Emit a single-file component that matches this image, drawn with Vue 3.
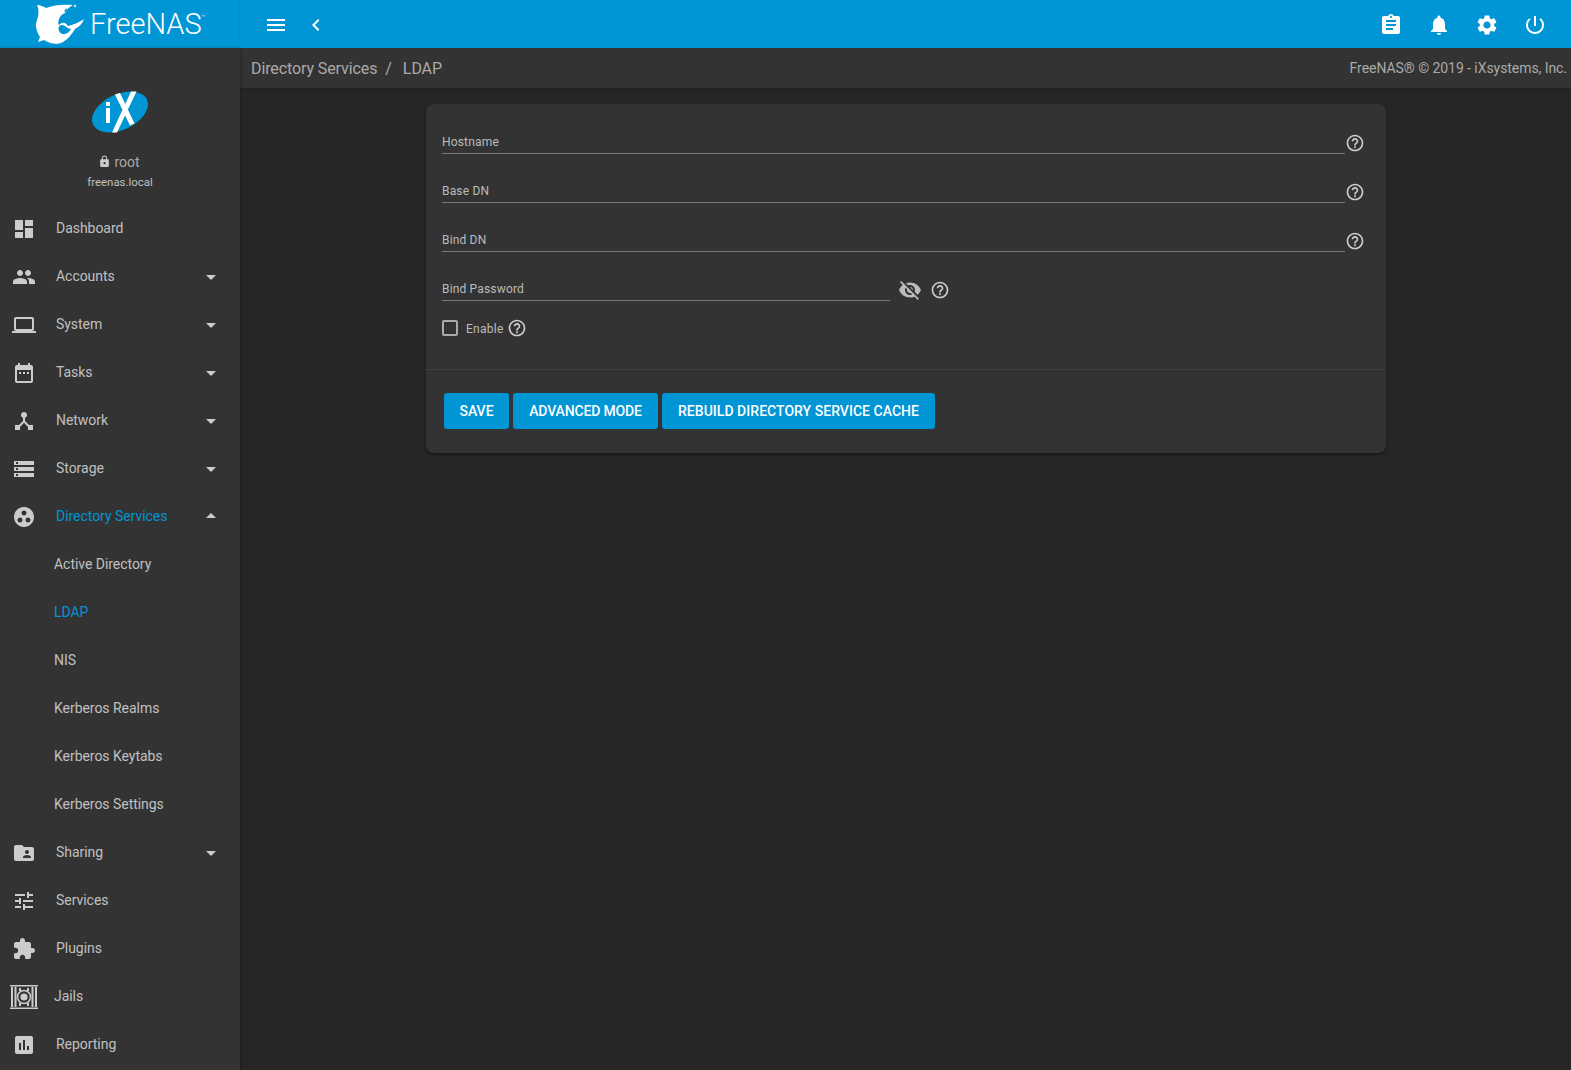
<script setup>
const P = {
  dashboard: 'M3 13h8V3H3v10zm0 8h8v-6H3v6zm10 0h8V11h-8v10zm0-18v6h8V3h-8z',
  group: 'M16 11c1.66 0 2.99-1.34 2.99-3S17.66 5 16 5c-1.66 0-3 1.34-3 3s1.34 3 3 3zm-8 0c1.66 0 2.99-1.34 2.99-3S9.66 5 8 5C6.34 5 5 6.34 5 8s1.34 3 3 3zm0 2c-2.33 0-7 1.17-7 3.5V19h14v-2.5c0-2.33-4.67-3.5-7-3.5zm8 0c-.29 0-.62.02-.97.05 1.16.84 1.97 1.97 1.97 3.45V19h6v-2.5c0-2.33-4.67-3.5-7-3.5z',
  laptop: 'M20 18c1.1 0 1.99-.9 1.99-2L22 6c0-1.1-.9-2-2-2H4c-1.1 0-2 .9-2 2v10c0 1.1.9 2 2 2H0v2h24v-2h-4zM4 6h16v10H4V6z',
  date: 'M9 11H7v2h2v-2zm4 0h-2v2h2v-2zm4 0h-2v2h2v-2zm2-7h-1V2h-2v2H8V2H6v2H5c-1.11 0-1.99.9-1.99 2L3 20c0 1.1.89 2 2 2h14c1.1 0 2-.9 2-2V6c0-1.1-.9-2-2-2zm0 16H5V9h14v11z',
  hub: 'M17 16l-4-4V8.82C14.16 8.4 15 7.3 15 6c0-1.66-1.34-3-3-3S9 4.34 9 6c0 1.3.84 2.4 2 2.82V12l-4 4H3v5h5v-3.05l4-4.2 4 4.2V21h5v-5h-4z',
  storage: 'M2 20h20v-4H2v4zm2-3h2v2H4v-2zM2 4v4h20V4H2zm4 3H4V5h2v2zm-4 7h20v-4H2v4zm2-3h2v2H4v-2z',
  work: 'M12 2C6.48 2 2 6.48 2 12s4.48 10 10 10 10-4.48 10-10S17.52 2 12 2zM8 17.5c-1.38 0-2.5-1.12-2.5-2.5s1.12-2.5 2.5-2.5 2.5 1.12 2.5 2.5-1.12 2.5-2.5 2.5zM9.5 8c0-1.38 1.12-2.5 2.5-2.5s2.5 1.12 2.5 2.5-1.12 2.5-2.5 2.5S9.5 9.38 9.5 8zm6.5 9.5c-1.38 0-2.5-1.12-2.5-2.5s1.12-2.5 2.5-2.5 2.5 1.12 2.5 2.5-1.12 2.5-2.5 2.5z',
  folder: 'M20 6h-8l-2-2H4c-1.1 0-1.99.9-1.99 2L2 18c0 1.1.9 2 2 2h16c1.1 0 2-.9 2-2V8c0-1.1-.9-2-2-2zm-5 3c1.1 0 2 .9 2 2s-.9 2-2 2-2-.9-2-2 .9-2 2-2zm4 8h-8v-1c0-1.33 2.67-2 4-2s4 .67 4 2v1z',
  tune: 'M3 17v2h6v-2H3zM3 5v2h10V5H3zm10 16v-2h8v-2h-8v-2h-2v6h2zM7 9v2H3v2h4v2h2V9H7zm14 4v-2H11v2h10zm-6-4h2V7h4V5h-4V3h-2v6z',
  ext: 'M20.5 11H19V7c0-1.1-.9-2-2-2h-4V3.5C13 2.12 11.88 1 10.5 1S8 2.12 8 3.5V5H4c-1.1 0-1.99.9-1.99 2v3.8H3.5c1.49 0 2.7 1.21 2.7 2.7s-1.21 2.7-2.7 2.7H2V20c0 1.1.9 2 2 2h3.8v-1.5c0-1.49 1.21-2.7 2.7-2.7 1.49 0 2.7 1.21 2.7 2.7V22H17c1.1 0 2-.9 2-2v-4h1.5c1.38 0 2.5-1.12 2.5-2.5S21.88 11 20.5 11z',
  chart: 'M19 3H5c-1.1 0-2 .9-2 2v14c0 1.1.9 2 2 2h14c1.1 0 2-.9 2-2V5c0-1.1-.9-2-2-2zM9 17H7v-7h2v7zm4 0h-2V7h2v10zm4 0h-2v-4h2v4z',
  assign: 'M19 3h-4.18C14.4 1.84 13.3 1 12 1c-1.3 0-2.4.84-2.82 2H5c-1.1 0-2 .9-2 2v14c0 1.1.9 2 2 2h14c1.1 0 2-.9 2-2V5c0-1.1-.9-2-2-2zm-7 0c.55 0 1 .45 1 1s-.45 1-1 1-1-.45-1-1 .45-1 1-1zm2 14H7v-2h7v2zm3-4H7v-2h10v2zm0-4H7V7h10v2z',
  bell: 'M12 22c1.1 0 2-.9 2-2h-4c0 1.1.89 2 2 2zm6-6v-5c0-3.07-1.64-5.64-4.5-6.32V4c0-.83-.67-1.5-1.5-1.5s-1.5.67-1.5 1.5v.68C7.63 5.36 6 7.92 6 11v5l-2 2v1h16v-1l-2-2z',
  gear: 'M19.14 12.94c.04-.3.06-.61.06-.94 0-.32-.02-.64-.07-.94l2.03-1.58c.18-.14.23-.41.12-.61l-1.92-3.32c-.12-.22-.37-.29-.59-.22l-2.39.96c-.5-.38-1.03-.7-1.62-.94l-.36-2.54c-.04-.24-.24-.41-.48-.41h-3.84c-.24 0-.43.17-.47.41l-.36 2.54c-.59.24-1.13.57-1.62.94l-2.39-.96c-.22-.08-.47 0-.59.22L2.74 8.87c-.12.21-.08.47.12.61l2.03 1.58c-.05.3-.09.63-.09.94s.02.64.07.94l-2.03 1.58c-.18.14-.23.41-.12.61l1.92 3.32c.12.22.37.29.59.22l2.39-.96c.5.38 1.03.7 1.62.94l.36 2.54c.05.24.24.41.48.41h3.84c.24 0 .44-.17.47-.41l.36-2.54c.59-.24 1.13-.56 1.62-.94l2.39.96c.22.08.47 0 .59-.22l1.92-3.32c.12-.22.07-.47-.12-.61l-2.01-1.58zM12 15.6c-1.98 0-3.6-1.62-3.6-3.6s1.62-3.6 3.6-3.6 3.6 1.62 3.6 3.6-1.62 3.6-3.6 3.6z',
  power: 'M13 3h-2v10h2V3zm4.83 2.17l-1.42 1.42C17.99 7.86 19 9.81 19 12c0 3.87-3.13 7-7 7s-7-3.13-7-7c0-2.19 1.01-4.14 2.58-5.42L6.17 5.17C4.23 6.82 3 9.26 3 12c0 4.97 4.03 9 9 9s9-4.03 9-9c0-2.74-1.23-5.18-3.17-6.83z',
  menu: 'M3 18h18v-2H3v2zm0-5h18v-2H3v2zm0-7v2h18V6H3z',
  back: 'M15.41 7.41L14 6l-6 6 6 6 1.41-1.41L10.83 12z',
  help: 'M11 18h2v-2h-2v2zm1-16C6.48 2 2 6.48 2 12s4.48 10 10 10 10-4.48 10-10S17.52 2 12 2zm0 18c-4.41 0-8-3.59-8-8s3.59-8 8-8 8 3.59 8 8-3.59 8-8 8zm0-14c-2.21 0-4 1.79-4 4h2c0-1.1.9-2 2-2s2 .9 2 2c0 2-3 1.75-3 5h2c0-2.25 3-2.5 3-5 0-2.21-1.79-4-4-4z',
  eyeoff: 'M12 7c2.76 0 5 2.24 5 5 0 .65-.13 1.26-.36 1.83l2.92 2.92c1.51-1.26 2.7-2.89 3.43-4.75-1.73-4.39-6-7.5-11-7.5-1.4 0-2.74.25-3.98.7l2.16 2.16C10.74 7.13 11.35 7 12 7zM2 4.27l2.28 2.28.46.46C3.08 8.3 1.78 10.02 1 12c1.73 4.39 6 7.5 11 7.5 1.55 0 3.03-.3 4.38-.84l.42.42L19.73 22 21 20.73 3.27 3 2 4.27zM7.53 9.8l1.55 1.55c-.05.21-.08.43-.08.65 0 1.66 1.34 3 3 3 .22 0 .44-.03.65-.08l1.55 1.55c-.67.33-1.41.53-2.2.53-2.76 0-5-2.24-5-5 0-.79.2-1.53.53-2.2zm4.31-.78l3.15 3.15.02-.16c0-1.66-1.34-3-3-3l-.17.01z',
  lock: 'M18 8h-1V6c0-2.76-2.24-5-5-5S7 3.24 7 6v2H6c-1.1 0-2 .9-2 2v10c0 1.1.9 2 2 2h12c1.1 0 2-.9 2-2V10c0-1.1-.9-2-2-2zm-6 9c-1.1 0-2-.9-2-2s.9-2 2-2 2 .9 2 2-.9 2-2 2zm3.1-9H8.9V6c0-1.71 1.39-3.1 3.1-3.1 1.71 0 3.1 1.39 3.1 3.1v2z'
}
const nav = [
  { label: 'Dashboard', icon: 'dashboard' },
  { label: 'Accounts', icon: 'group', caret: 'down' },
  { label: 'System', icon: 'laptop', caret: 'down' },
  { label: 'Tasks', icon: 'date', caret: 'down' },
  { label: 'Network', icon: 'hub', caret: 'down' },
  { label: 'Storage', icon: 'storage', caret: 'down' },
  { label: 'Directory Services', icon: 'work', caret: 'up', active: true },
  { label: 'Active Directory', sub: true },
  { label: 'LDAP', sub: true, active: true },
  { label: 'NIS', sub: true },
  { label: 'Kerberos Realms', sub: true },
  { label: 'Kerberos Keytabs', sub: true },
  { label: 'Kerberos Settings', sub: true },
  { label: 'Sharing', icon: 'folder', caret: 'down' },
  { label: 'Services', icon: 'tune' },
  { label: 'Plugins', icon: 'ext' },
  { label: 'Jails', jail: true },
  { label: 'Reporting', icon: 'chart' }
]
const fields = ['Hostname', 'Base DN', 'Bind DN']
const tops = ['assign', 'bell', 'gear', 'power']
</script>

<template>
  <div class="app">
    <header class="topbar">
      <div class="brand">
        <svg class="shark" viewBox="35 2 50 42">
          <path fill="#fff" d="M37 4 C41 4 44 6 46 7 C53 4 63 3 73 4 C69 6 66 9 65 12 C62 13 60 15 59 18 C58 21 58 23 59 24 C63 20 66 22 68 25 C72 24 78 22 84 18 C82 23 79 26 75 28 C72 33 68 38 63 41 C58 44 50 43 44 39 L38 41 L40 36 C36 30 35 24 37 19 C39 13 39 8 37 4Z"/>
          <path fill="#0095d5" d="M58.500 27 C59 24 62 23 65 25 C67 27 69 28 71 27.500 C70 31 66 33.500 62.500 33 C60 32.500 58.500 30 58.500 27Z"/>
          <path fill="#0095d5" d="M64 10 L67 6.500 L66 11Z"/>
          <circle cx="75" cy="5" r="1.200" fill="#cfe9f6"/>
        </svg>
        <span class="logotext">FreeNAS<sup>™</sup></span>
      </div>
      <div class="topleft">
        <svg class="ticon" viewBox="0 0 24 24"><path :d="P.menu" /></svg>
        <svg class="ticon back" viewBox="0 0 24 24"><path :d="P.back" /></svg>
      </div>
      <div class="topright">
        <svg v-for="t in tops" :key="t" class="ticon" viewBox="0 0 24 24"><path :d="P[t]" /></svg>
      </div>
    </header>

    <div class="body">
      <aside class="side">
        <div class="profile">
          <svg class="ix" viewBox="91 90 58 44">
            <ellipse cx="120" cy="112" rx="29.800" ry="17.800" transform="rotate(-25 120 112)" fill="#0095d5"/>
            <rect x="106" y="108" width="4" height="15" fill="#fff"/>
            <rect x="106" y="102" width="4" height="4" fill="#fff"/>
            <path fill="#fff" d="M115 94.500L120 93L134.500 123.500L130 125.500Z"/>
            <path fill="#fff" d="M131 91.500L136.500 91.500L117 132.500L112 132.500Z"/>
          </svg>
          <div class="user"><svg viewBox="0 0 24 24"><path :d="P.lock" /></svg><span>root</span></div>
          <div class="host">freenas.local</div>
        </div>
        <nav>
          <div v-for="n in nav" :key="n.label" class="item" :class="{ sub: n.sub, on: n.active, jails: n.jail }">
            <svg v-if="n.icon" class="nicon" viewBox="0 0 24 24"><path :d="P[n.icon]" /></svg>
            <svg v-if="n.jail" class="jicon" viewBox="0 0 28 24">
              <g fill="#ccc">
                <rect x="0" y="0" width="28" height="1.500"/>
                <rect x="0" y="22.500" width="28" height="1.500"/>
                <rect x="1" y="2" width="2" height="20"/>
                <rect x="25" y="2" width="2" height="20"/>
                <rect x="4.500" y="2" width="2" height="20"/>
                <rect x="21.500" y="2" width="2" height="20"/>
              </g>
              <circle cx="14" cy="12" r="6.500" fill="none" stroke="#ccc" stroke-width="1.500"/>
              <circle cx="14" cy="12" r="3.600" fill="#ccc"/>
              <path d="M9 3h2v3H9zM17 3h2v3h-2zM9 18h2v3H9zM17 18h2v3h-2z" fill="#ccc"/>
            </svg>
            <span class="label">{{ n.label }}</span>
            <i v-if="n.caret" class="caret" :class="n.caret"></i>
          </div>
        </nav>
      </aside>

      <main class="main">
        <div class="crumbs">
          <div class="trail"><span>Directory Services</span><span class="sep">/</span><span>LDAP</span></div>
          <div class="copy">FreeNAS® © 2019 - iXsystems, Inc.</div>
        </div>
        <section class="card">
          <div class="form">
            <div v-for="f in fields" :key="f" class="field">
              <div class="input">{{ f }}</div>
              <svg class="help" viewBox="0 0 24 24"><path :d="P.help" /></svg>
            </div>
            <div class="field pw">
              <div class="input">Bind Password</div>
              <svg class="eye" viewBox="0 0 24 24"><path :d="P.eyeoff" /></svg>
              <svg class="help" viewBox="0 0 24 24"><path :d="P.help" /></svg>
            </div>
            <div class="check">
              <span class="box"></span>
              <span class="chk">Enable</span>
              <svg class="help" viewBox="0 0 24 24"><path :d="P.help" /></svg>
            </div>
          </div>
          <div class="actions">
            <button class="b1">SAVE</button>
            <button class="b2">ADVANCED MODE</button>
            <button class="b3">REBUILD DIRECTORY SERVICE CACHE</button>
          </div>
        </section>
      </main>
    </div>
  </div>
</template>

<style scoped>
.app { width: 1571px; height: 1070px; overflow: hidden; background: #262626; font-family: Roboto, sans-serif; color: #c0c0c0; display: flex; flex-direction: column; }
.topbar { height: 48px; flex: none; background: #0095d5; display: flex; align-items: center; position: relative; }
.brand { width: 240px; height: 48px; flex: none; display: flex; align-items: center; border-right: 1px solid #0a8cc6; box-sizing: border-box; padding-left: 35px; }
.shark { width: 50px; height: 42px; flex: none; }
.logotext { font-family: Roboto, sans-serif; font-weight: 300; font-size: 29px; color: #fff; letter-spacing: 0; margin-left: 5px; line-height: 48px; white-space: nowrap; margin-top: -1px; }
.logotext sup { font-size: 6px; vertical-align: 15px; line-height: 0; letter-spacing: 0; }
.topleft { display: flex; align-items: center; margin-left: 24px; gap: 16px; margin-top: 1px; }
.topright { margin-left: auto; margin-right: 24px; display: flex; gap: 24px; margin-top: 1px; }
.ticon { width: 24px; height: 24px; fill: #fff; display: block; }
.body { flex: 1; display: flex; min-height: 0; }
.side { width: 240px; flex: none; background: #333; box-shadow: 1px 0 3px rgba(0,0,0,.25); position: relative; z-index: 2; }
.profile { height: 156px; display: flex; flex-direction: column; align-items: center; box-sizing: border-box; padding-top: 42px; }
.ix { width: 58px; height: 44px; display: block; flex: none; }
.user { display: flex; align-items: center; margin-top: 18px; font-size: 14px; line-height: 20px; color: #aaa; gap: 3px; margin-right: 2px; }
.user svg { width: 13px; height: 13px; fill: #ccc; margin-top: -2px; }
.host { font-size: 11.4px; line-height: 16px; margin-top: 2px; color: #c0c0c0; }
.item { height: 48px; display: flex; align-items: center; font-size: 14px; position: relative; padding-left: 12px; }
.label { letter-spacing: -.04px; }
.nicon { width: 24px; height: 24px; fill: #ccc; flex: none; margin-right: 20px; margin-top: 2px; }
.jicon { width: 28px; height: 24px; flex: none; margin-left: -2px; margin-right: 16px; margin-top: 2px; }
.item.sub { padding-left: 54px; }
.item.on .label { color: #0095d5; }
.caret { position: absolute; right: 24px; top: 23px; width: 0; height: 0; border-left: 5px solid transparent; border-right: 5px solid transparent; }
.caret.down { border-top: 5px solid #ccc; }
.caret.up { border-bottom: 5px solid #ccc; top: 21px; }
.main { flex: 1; min-width: 0; }
.crumbs { height: 40px; background: #333; display: flex; align-items: center; justify-content: space-between; padding: 0 4px 0 11px; box-shadow: 0 1px 3px rgba(0,0,0,.2); }
.trail { font-size: 16px; color: #aaa; display: flex; letter-spacing: -.1px; }
.sep { margin: 0 11px 0 8px; }
.copy { font-size: 14px; color: #aaa; letter-spacing: -.06px; }
.card { width: 960px; height: 349px; margin: 16px 0 0 186px; background: #333; border-radius: 8px; box-shadow: 0 2px 3px rgba(0,0,0,.35); display: flex; flex-direction: column; }
.form { height: 266px; flex: none; box-sizing: border-box; padding: 14px 16px 0; border-bottom: 1px solid #424242; }
.field { display: flex; align-items: center; height: 49px; }
.input { flex: 0 0 903px; box-sizing: border-box; height: 25px; border-bottom: 1px solid #777; font-size: 12px; letter-spacing: .17px; color: #bbb; line-height: 26px; margin-bottom: 3px; }
.help { width: 20px; height: 20px; fill: #ccc; flex: none; margin-left: 0; margin-top: 1px; }
.pw .input { flex-basis: 448px; }
.eye { width: 24px; height: 24px; fill: #bbb; flex: none; margin-left: 8px; margin-right: 8px; margin-top: 1px; }
.check { display: flex; align-items: center; height: 28px; }
.box { width: 12px; height: 12px; border: 2px solid #aaa; border-radius: 2px; flex: none; }
.chk { font-size: 12px; color: #bbb; letter-spacing: .25px; margin-left: 8px; margin-right: 3px; margin-top: 2px; }
.check .help { margin: 0; }
.actions { display: flex; gap: 4px; padding: 23px 18px 0; }
button { height: 36px; background: #0095d5; color: #fff; border: 0; border-radius: 3px; font-family: Roboto, sans-serif; font-weight: 500; font-size: 14px; padding: 0; white-space: nowrap; }
.b1 { width: 65px; }
.b2 { width: 145px; letter-spacing: -.15px; }
.b3 { width: 273px; letter-spacing: .03px; }
</style>
